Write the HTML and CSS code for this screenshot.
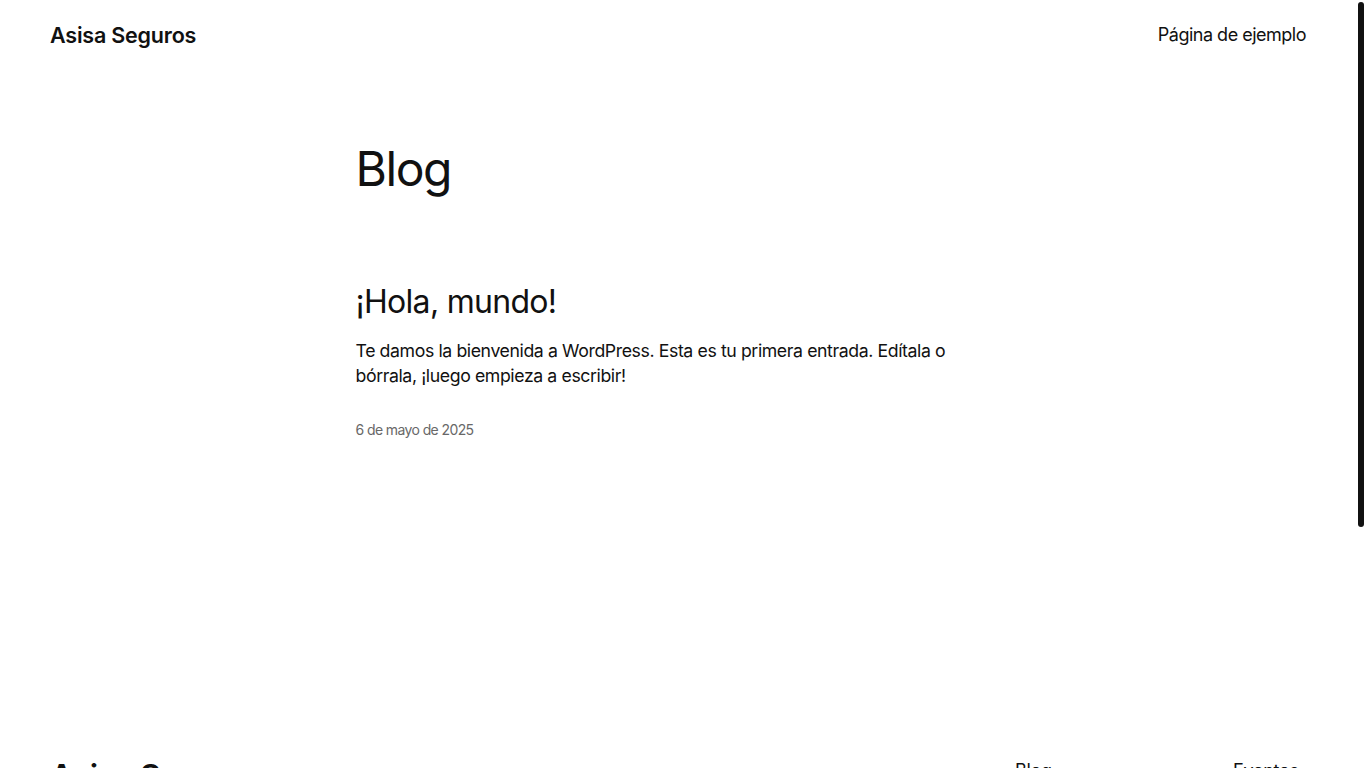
FILE: index.html
```html
<!DOCTYPE html>
<html lang="es">
<head>
<meta charset="utf-8">
<title>Blog – Asisa Seguros</title>
<link rel="stylesheet" href="styles.css">
</head>
<body>
<div class="page">
  <header class="site-header">
    <a class="site-title" href="#">Asisa Seguros</a>
    <nav class="header-nav"><a href="#">Página de ejemplo</a></nav>
  </header>

  <main class="site-main">
    <div class="content">
      <h1 class="page-title">Blog</h1>
      <article class="post">
        <h2 class="post-title"><a href="#">¡Hola, mundo!</a></h2>
        <p class="post-excerpt">Te damos la bienvenida a WordPress. Esta es tu primera entrada. Edítala o bórrala, ¡luego empieza a escribir!</p>
        <time class="post-date">6 de mayo de 2025</time>
      </article>
    </div>
  </main>

  <footer class="site-footer">
    <div class="footer-top">
      <a class="footer-title" href="#">Asisa Seguros</a>
      <div class="footer-navs">
        <ul class="footer-nav nav-a">
          <li><a href="#">Blog</a></li>
          <li><a href="#">Acerca de</a></li>
          <li><a href="#">Preguntas frecuentes</a></li>
          <li><a href="#">Autores</a></li>
        </ul>
        <ul class="footer-nav nav-b">
          <li><a href="#">Eventos</a></li>
          <li><a href="#">Shop</a></li>
          <li><a href="#">Patrones</a></li>
          <li><a href="#">Temas</a></li>
        </ul>
      </div>
    </div>
    <hr class="footer-sep">
    <div class="footer-bottom">
      <p>Twenty Twenty-Five</p>
      <p>Diseñado con <a href="#">WordPress</a></p>
    </div>
  </footer>
</div>
<div class="scrollbar" aria-hidden="true"><div class="scrollbar-thumb"></div></div>
</body>
</html>
```

FILE: styles.css
```css
html {
  background: #ffffff;
}

body {
  margin: 0;
  font-family: Inter, "Noto Sans", "Liberation Sans", sans-serif;
  color: #111111;
  background: #ffffff;
  font-size: 18px;
  line-height: 1.4;
}

.page {
  margin-right: 10px;
}

/* simulated window scrollbar (overlay) */
.scrollbar {
  position: fixed;
  top: 0;
  right: 0;
  width: 10px;
  height: 100vh;
  background: #ffffff;
}

.scrollbar-thumb {
  margin: 2px 0 0 2px;
  width: 6px;
  height: 525px;
  border-radius: 3px;
  background: #111111;
}

a {
  color: inherit;
  text-decoration: none;
}

.site-header {
  display: flex;
  justify-content: space-between;
  align-items: center;
  padding: 20px 50px;
}

.site-title {
  font-size: 21.5px;
  font-weight: 600;
  line-height: 30px;
  letter-spacing: -0.2px;
}

.header-nav {
  font-size: 18px;
  line-height: 30px;
  font-weight: 400;
  letter-spacing: -0.5px;
}

.site-main {
  padding: 72px 0 318px;
}

.content {
  width: 645px;
  margin: 0 auto;
}

.page-title {
  margin: 0;
  font-size: 48px;
  line-height: 54px;
  font-weight: 400;
  letter-spacing: -1.4px;
}

.post {
  margin-top: 88px;
}

.post-title {
  margin: 0;
  font-size: 32px;
  line-height: 36px;
  font-weight: 400;
  letter-spacing: -0.7px;
}

.post-excerpt {
  margin: 18px 0 0;
  font-size: 17.7px;
  line-height: 25.2px;
  letter-spacing: -0.4px;
}

.post-date {
  display: block;
  margin-top: 32px;
  font-size: 14px;
  line-height: 19.6px;
  color: #686868;
  letter-spacing: -0.6px;
}

.site-footer {
  padding: 0 50px 76px;
}

.footer-top {
  display: flex;
  justify-content: space-between;
  align-items: flex-start;
}

.footer-title {
  font-size: 32px;
  line-height: 38px;
  font-weight: 600;
  letter-spacing: -0.5px;
}

.footer-navs {
  display: flex;
  gap: 40px;
}

.footer-nav {
  list-style: none;
  margin: 0;
  padding: 0;
  display: flex;
  flex-direction: column;
  gap: 8px;
  font-size: 18px;
  line-height: 25.2px;
  letter-spacing: -0.3px;
}

.nav-a {
  width: 178px;
}

.nav-b {
  width: 73px;
}

.footer-sep {
  margin: 100px 0 30px;
  border: 0;
  border-top: 1px solid #dddddd;
}

.footer-bottom {
  display: flex;
  justify-content: space-between;
  font-size: 14px;
  line-height: 19.6px;
}

.footer-bottom p {
  margin: 0;
}
```
